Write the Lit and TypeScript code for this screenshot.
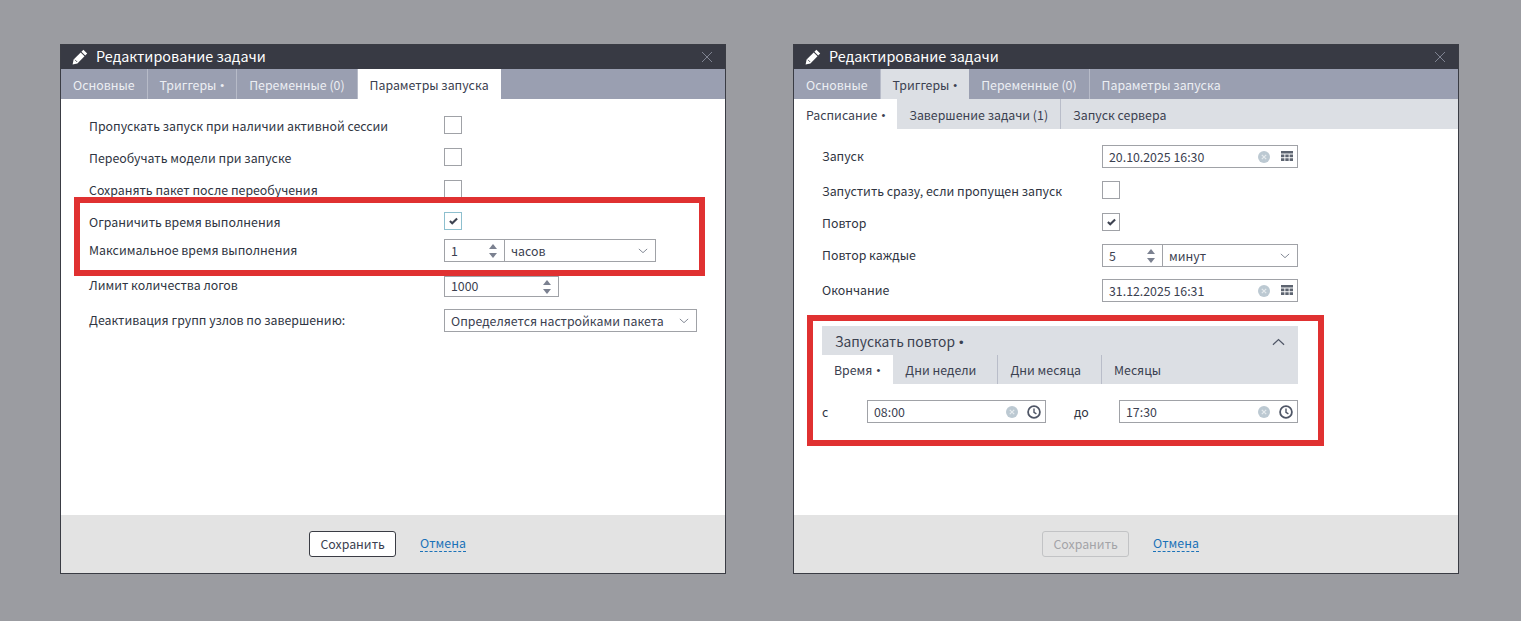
import { LitElement, html, css } from "lit";
import { customElement } from "lit/decorators.js";

const pencil = html`<svg class="pencil" viewBox="0 0 16 16" width="16" height="16"><path fill="#fff" d="M11.4 .8 15.2 4.6 13.2 6.6 9.4 2.8ZM8.7 3.5 12.5 7.3 5.4 14.4.6 15.4 1.6 10.6Z"/><path fill="none" stroke="#383a44" stroke-width=".8" d="M3 10.8 5.2 13"/></svg>`;
const chevron = html`<svg class="chev" viewBox="0 0 12 7" width="10" height="6"><path fill="none" stroke="#7a808c" stroke-width="1.1" d="M1 1l5 4.5L11 1"/></svg>`;
const spin = html`<svg class="spin" viewBox="0 0 10 16" width="10" height="16"><path fill="#7b8190" d="M5 1l4 5H1z"/><path fill="#7b8190" d="M5 15L1 10h8z"/></svg>`;
const clear = html`<svg class="ic" viewBox="0 0 12 12" width="12" height="12"><circle cx="6" cy="6" r="6" fill="#bcc9d2"/><path stroke="#e6ebee" stroke-width="1.2" d="M3.8 3.8l4.4 4.4M8.2 3.8l-4.4 4.4"/></svg>`;
const cal = html`<svg class="ic calc" viewBox="0 0 12 11" width="12" height="11"><path fill="#5d6470" d="M0 0h12v2.4H0zM0 3.4h3.4v2.8H0zM4.3 3.4h3.4v2.8H4.3zM8.6 3.4H12v2.8H8.6zM0 7.2h3.4V10H0zM4.3 7.2h3.4V10H4.3zM8.6 7.2H12V10H8.6z"/></svg>`;
const clock = html`<svg class="ic" viewBox="0 0 14 14" width="14" height="14"><circle cx="7" cy="7" r="5.9" fill="none" stroke="#4f5666" stroke-width="1.8"/><path fill="none" stroke="#4f5666" stroke-width="1.4" d="M7 3.4V7.3l2.4 1.6"/></svg>`;
const check = html`<svg viewBox="0 0 12 10" width="9" height="8"><path fill="none" stroke="#3d4250" stroke-width="2.8" d="M1.2 5 4.3 8 10.8 1.6"/></svg>`;
const dot = html`<span class="dot">•</span>`;

@customElement("app-root")
export class AppRoot extends LitElement {
  static styles = css`
    :host {
      display: block;
      width: 1521px;
      height: 621px;
      position: relative;
      overflow: hidden;
      background: #9b9ca1;
      font-family: "Noto Sans CJK SC", "Noto Sans", sans-serif;
      font-size: 12.35px;
      line-height: 16px;
      color: #2f3542;
    }
    .desk { display: flex; gap: 67px; padding: 44px 0 0 60px; }
    .dlg {
      width: 666px; height: 530px; box-sizing: border-box;
      border: 1px solid #3a3c44; background: #fff;
      display: flex; flex-direction: column;
    }
    .title {
      height: 24px; flex: none; background: #383a44; color: #fff;
      display: flex; align-items: center; padding-left: 11px; gap: 8px;
      font-size: 14.35px; position: relative;
    }
    .title span { position: relative; top: -1px; }
    .close { position: absolute; right: 12px; top: 6px; }
    .tabs { display: flex; height: 30px; flex: none; background: #9a9fb1; }
    .tab {
      display: flex; align-items: center; padding: 2px 12px 0;
      color: #eceef3; border-right: 1px solid #b7bbc8; white-space: nowrap;
    }
    .tab.last { border-right: 0; }
    .tab.on { background: #fff; color: #3b4150; border-right: 0; }
    .tab.mid { background: #dcdfe4; color: #3b4150; border-right: 0; }
    .dot { font-family: "Liberation Sans", sans-serif; font-size: 11px; margin-left: 4px; }
    .sub { display: flex; height: 30px; flex: none; background: #dcdfe4; }
    .sub .t {
      display: flex; align-items: center; padding: 2px 12px 0;
      color: #3b4150; border-right: 1px solid #b9bdc9; white-space: nowrap;
    }
    .sub .t.on { background: #fff; border-right: 0; }
    .sub .t.last { border-right: 0; }
    .body { flex: 1; min-height: 0; }
    .b1 { padding: 12px 0 0 28px; }
    .b2 { padding: 16px 0 0 28px; }
    .row { display: flex; align-items: center; }
    .r32 { height: 32px; }
    .lab { flex: none; position: relative; top: -1px; }
    .lab.high { top: -2px; }
    .lab.low { top: 1px; }
    .l1 { width: 355px; }
    .l2 { width: 280px; }
    .cb {
      width: 18px; height: 18px; box-sizing: border-box; background: #fff;
      border: 1px solid #a0a2a7; display: flex; align-items: center; justify-content: center;
    }
    .up { margin-bottom: 4px; }
    .cb.focus { border-color: #8dbfce; }
    .field {
      box-sizing: border-box; height: 23px; border: 1px solid #a0a2a7; background: #fff;
      display: flex; align-items: center; color: #3b4150;
    }
    .f115 { width: 115px; height: 21px; }
    .f196 { width: 196px; }
    .f212 { width: 212px; }
    .f253 { width: 253px; }
    .val { flex: 1; padding-left: 6px; white-space: nowrap; }
    .f115 .val { position: relative; top: -1px; }
    .spinbox { width: 60px; height: 100%; display: flex; align-items: center; padding-right: 6px; box-sizing: border-box; border-right: 1px solid #a0a2a7; flex: none; }
    .spinbox.solo { width: 100%; border-right: 0; }
    .sel { flex: 1; display: flex; align-items: center; padding: 0 7px 0 6px; height: 100%; }
    .sel span { flex: 1; }
    .ic { flex: none; }
    .ic + .ic { margin-left: 9px; }
    .ic + .calc { margin-left: 11px; }
    .field .ic:last-child { margin-right: 4px; }
    .mt12 { margin-top: 12px; }
    .mt13 { margin-top: 13px; }
    .mt14 { margin-top: 14px; }
    .foot {
      height: 58px; flex: none; background: #e3e3e3;
      display: flex; align-items: center; justify-content: center; gap: 24px; padding-right: 11px;
    }
    .btn {
      box-sizing: border-box; width: 87px; height: 26px; border: 1px solid #3a3c44; border-radius: 3px;
      background: #fff; display: flex; align-items: center; justify-content: center; color: #3b4150;
    }
    .btn.off { background: transparent; border-color: #c2c3c5; color: #a3a4a8; }
    .cancel { color: #1b72b8; border-bottom: 1px dashed #1b72b8; line-height: 14px; padding: 0 0 1px; }
    .acc { width: 476px; margin-top: 24px; }
    .acch {
      height: 29px; background: #dcdfe4; display: flex; align-items: center; padding: 2px 13px 0; box-sizing: border-box;
      font-size: 13.8px; color: #3b4150; justify-content: space-between;
    }
    .acch .dot { font-size: 13px; }
    .atabs { display: flex; height: 29px; background: #dcdfe4; }
    .atabs .t { display: flex; align-items: center; padding: 0 21px 0 12px; border-right: 1px solid #b9bdc9; color: #3b4150; white-space: nowrap; }
    .atabs .t.on { background: #fff; border-right: 0; padding-right: 13px; }
    .atabs .t.last { border-right: 0; }
    .atabs .t.m { padding-right: 20px; }
    .times { display: flex; align-items: center; margin-top: 16px; }
    .times .c { width: 45px; flex: none; }
    .times .d { width: 73px; flex: none; padding-left: 28px; box-sizing: border-box; }
    .times .field { width: 179px; }
    .mark { position: absolute; box-sizing: border-box; border: 6px solid #e03131; pointer-events: none; }
    .m1 { left: 74px; top: 197px; width: 631px; height: 79px; }
    .m2 { left: 807px; top: 315px; width: 517px; height: 131px; }
  `;

  private header() {
    return html`<div class="title">${pencil}<span>Редактирование задачи</span>
      <svg class="close" viewBox="0 0 12 12" width="12" height="12"><path stroke="#7f8391" stroke-width="1" d="M1 1l10 10M11 1L1 11"/></svg></div>`;
  }
  private dt(v: string, second = cal) {
    return html`<div class="field f196"><span class="val">${v}</span>${clear}${second}</div>`;
  }

  render() {
    return html`<div class="desk">
      <section class="dlg">
        ${this.header()}
        <div class="tabs">
          <div class="tab">Основные</div><div class="tab">Триггеры${dot}</div><div class="tab">Переменные (0)</div><div class="tab on">Параметры запуска</div>
        </div>
        <div class="body b1">
          <div class="row r32"><div class="lab l1">Пропускать запуск при наличии активной сессии</div><div class="cb up"></div></div>
          <div class="row r32"><div class="lab l1">Переобучать модели при запуске</div><div class="cb up"></div></div>
          <div class="row r32"><div class="lab l1">Сохранять пакет после переобучения</div><div class="cb up"></div></div>
          <div class="row r32"><div class="lab l1">Ограничить время выполнения</div><div class="cb up focus">${check}</div></div>
          <div class="row"><div class="lab l1">Максимальное время выполнения</div>
            <div class="field f212"><div class="spinbox"><span class="val">1</span>${spin}</div><div class="sel"><span>часов</span>${chevron}</div></div></div>
          <div class="row mt14"><div class="lab l1 high">Лимит количества логов</div>
            <div class="field f115"><div class="spinbox solo"><span class="val">1000</span>${spin}</div></div></div>
          <div class="row mt12"><div class="lab l1">Деактивация групп узлов по завершению:</div>
            <div class="field f253"><div class="sel"><span>Определяется настройками пакета</span>${chevron}</div></div></div>
        </div>
        <div class="foot"><div class="btn">Сохранить</div><div class="cancel">Отмена</div></div>
      </section>

      <section class="dlg">
        ${this.header()}
        <div class="tabs">
          <div class="tab">Основные</div><div class="tab mid">Триггеры${dot}</div><div class="tab">Переменные (0)</div><div class="tab last">Параметры запуска</div>
        </div>
        <div class="sub">
          <div class="t on">Расписание${dot}</div><div class="t">Завершение задачи (1)</div><div class="t last">Запуск сервера</div>
        </div>
        <div class="body b2">
          <div class="row"><div class="lab l2">Запуск</div>${this.dt("20.10.2025 16:30")}</div>
          <div class="row mt13"><div class="lab l2 low">Запустить сразу, если пропущен запуск</div><div class="cb"></div></div>
          <div class="row mt14"><div class="lab l2 low">Повтор</div><div class="cb">${check}</div></div>
          <div class="row mt13"><div class="lab l2">Повтор каждые</div>
            <div class="field f196"><div class="spinbox"><span class="val">5</span>${spin}</div><div class="sel"><span>минут</span>${chevron}</div></div></div>
          <div class="row mt12"><div class="lab l2">Окончание</div>${this.dt("31.12.2025 16:31")}</div>
          <div class="acc">
            <div class="acch"><span>Запускать повтор${dot}</span>
              <svg viewBox="0 0 14 8" width="13" height="8"><path fill="none" stroke="#4f5666" stroke-width="1.3" d="M1 7l6-5.5L13 7"/></svg></div>
            <div class="atabs"><div class="t on">Время${dot}</div><div class="t">Дни недели</div><div class="t m">Дни месяца</div><div class="t last">Месяцы</div></div>
            <div class="times">
              <span class="c">с</span>
              <div class="field"><span class="val">08:00</span>${clear}${clock}</div>
              <span class="d">до</span>
              <div class="field"><span class="val">17:30</span>${clear}${clock}</div>
            </div>
          </div>
        </div>
        <div class="foot"><div class="btn off">Сохранить</div><div class="cancel">Отмена</div></div>
      </section>
    </div>
    <div class="mark m1"></div>
    <div class="mark m2"></div>`;
  }
}
